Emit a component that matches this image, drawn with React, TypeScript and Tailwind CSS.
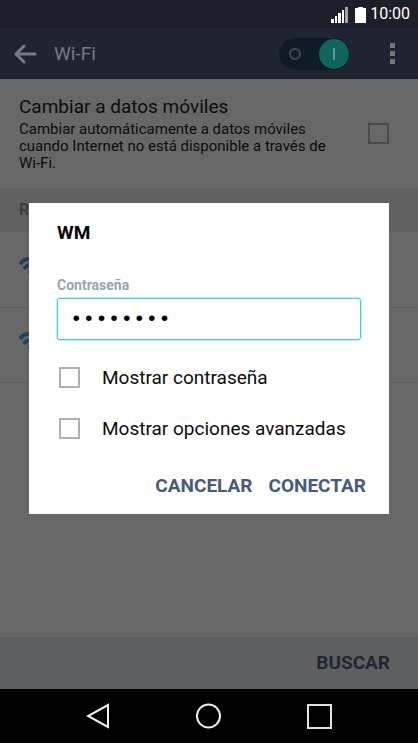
import React from 'react';

const WifiIcon = () => {
  return (
    <svg width="22" height="20" viewBox="0 0 22 20" fill="none" stroke="#23405a" strokeWidth="4">
      <path d="M1 8C6 1 16 1 21 8" />
      <path d="M5 13C8 8 14 8 17 13" />
      <circle cx="11" cy="16" r="2" fill="#23405a" stroke="none" />
    </svg>
  );
};

const StatusBar = () => {
  return (
    <div className="flex h-7 items-center justify-end bg-[#1c1e29] pr-2 text-white">
      <svg width="18" height="17" viewBox="0 0 18 17" fill="#fff" className="mr-1.5">
        <path d="M0 13h3v4H0zM4 10h2v7H4zM7 7h3v10H7zM11 4h2v13h-2z" />
        <path d="M14 1h3v16h-3z" fill="#a4a5a9" />
      </svg>
      <svg width="11" height="17" viewBox="0 0 11 17" fill="#fff" className="mr-1">
        <path d="M3 1h5v1h3v15H0V2h3z" />
      </svg>
      <span className="text-base">10:00</span>
    </div>
  );
};

const Header = () => {
  return (
    <header className="flex h-[51px] items-center bg-[#1e2432] pl-3.5 pr-5">
      <button aria-label="Atrás" className="mr-4">
        <svg width="24" height="20" viewBox="0 0 24 20" fill="none" stroke="#777b80" strokeWidth="3" strokeLinecap="round" strokeLinejoin="round">
          <path d="M10 2L2 10L10 18M2 10H21" />
        </svg>
      </button>
      <h1 className="text-[19px] leading-7 text-[#777b80]">Wi-Fi</h1>
      <button role="switch" aria-checked="true" aria-label="Wi-Fi" className="ml-auto mr-9 flex h-8 w-[71px] items-center justify-between rounded-full bg-[#101b23] pl-2.5 pr-px">
        <span className="h-3 w-3 rounded-full border-2 border-[#3f4850]"></span>
        <span className="flex h-[30px] w-[30px] items-center justify-center rounded-full bg-[#10645e]">
          <span className="h-3 w-0.5 bg-[#6d8f8d]"></span>
        </span>
      </button>
      <button aria-label="Más opciones" className="flex w-3 flex-col items-center gap-[3px]">
        <span className="h-[5px] w-[5px] bg-[#777777]"></span>
        <span className="h-[5px] w-[5px] bg-[#777777]"></span>
        <span className="h-[5px] w-[5px] bg-[#777777]"></span>
      </button>
    </header>
  );
};

const PasswordDialog = () => {
  return (
    <div className="absolute inset-x-0 bottom-0 top-7 flex items-center justify-center px-[29px]">
      <form role="dialog" aria-label="WM" className="w-full max-w-md bg-white px-7 pb-3.5 pt-4" onSubmit={(e) => e.preventDefault()}>
        <h2 className="text-[19px] font-bold leading-7 text-black">WM</h2>
        <label htmlFor="password" className="mt-7 block text-sm font-bold text-[#94a7b0]">
          Contraseña
        </label>
        <input
          id="password"
          type="password"
          defaultValue="12345678"
          className="mt-[3px] block h-[42px] w-full rounded-[3px] border border-[#4fc8c8] bg-white px-3 font-['Liberation_Mono',monospace] text-[21px] text-black outline-none ring-1 ring-[#b8f8f6]"
        />
        <label className="mt-6 flex h-[27px] items-center text-[19px] leading-7 text-[#0c0c0c]">
          <input type="checkbox" className="ml-0.5 mr-[22px] h-[21px] w-[21px] appearance-none border-2 border-[#b0b0b0]" />
          Mostrar contraseña
        </label>
        <label className="mt-6 flex h-[27px] items-center text-[19px] leading-7 text-[#0c0c0c]">
          <input type="checkbox" className="ml-0.5 mr-[22px] h-[21px] w-[21px] appearance-none border-2 border-[#b0b0b0]" />
          Mostrar opciones avanzadas
        </label>
        <div className="-mr-[5px] mt-[30px] flex justify-end gap-4 text-[19px] font-bold leading-7 text-[#485a7b]">
          <button>CANCELAR</button>
          <button>CONECTAR</button>
        </div>
      </form>
    </div>
  );
};

const App = () => {
  return (
    <div className="flex min-h-screen flex-col bg-black font-[Roboto,sans-serif]">
      <div className="relative flex grow flex-col bg-[#676767]">
        <StatusBar />
        <Header />
        <main className="flex grow flex-col">
          <label className="flex h-[109px] items-center pl-[19px] pr-[29px]">
            <span className="grow pb-0.5">
              <span className="block text-[19px] leading-7 text-[#0c0c0c]">Cambiar a datos móviles</span>
              <span className="block max-w-[312px] text-[15px] leading-[17px] text-[#0c0c0c]">
                Cambiar automáticamente a datos móviles cuando Internet no está disponible a través de Wi-Fi.
              </span>
            </span>
            <input type="checkbox" className="h-[21px] w-[21px] shrink-0 appearance-none border-2 border-[#4a4a4a]" />
          </label>
          <h2 className="flex h-11 items-center bg-[#606060] px-[19px] text-base font-bold text-[#3c3c3c]">REDES WI-FI</h2>
          <ul>
            <li className="flex h-[75px] items-center px-[19px] pb-2">
              <WifiIcon />
            </li>
            <li className="flex h-[76px] items-center border-y border-[#5e5e5e] px-[19px] pb-2">
              <WifiIcon />
            </li>
          </ul>
        </main>
        <footer className="flex h-[52px] items-center justify-end bg-[#5e5f61] pr-7">
          <button className="text-[19px] font-bold leading-7 text-[#1e2635]">BUSCAR</button>
        </footer>
        <PasswordDialog />
      </div>
      <nav className="flex h-[54px] items-center justify-center gap-[84px] bg-black">
        <button aria-label="Atrás">
          <svg width="26" height="26" viewBox="0 0 26 26" fill="none" stroke="#f0f0f0" strokeWidth="2">
            <path d="M22 2V24L2 13Z" />
          </svg>
        </button>
        <button aria-label="Inicio">
          <svg width="26" height="26" viewBox="0 0 26 26" fill="none" stroke="#f0f0f0" strokeWidth="2">
            <circle cx="12.5" cy="13" r="11.5" />
          </svg>
        </button>
        <button aria-label="Recientes">
          <svg width="26" height="26" viewBox="0 0 26 26" fill="none" stroke="#e0e5e4" strokeWidth="2">
            <path d="M2 2H25V25H2Z" />
          </svg>
        </button>
      </nav>
    </div>
  );
};

export default App;
